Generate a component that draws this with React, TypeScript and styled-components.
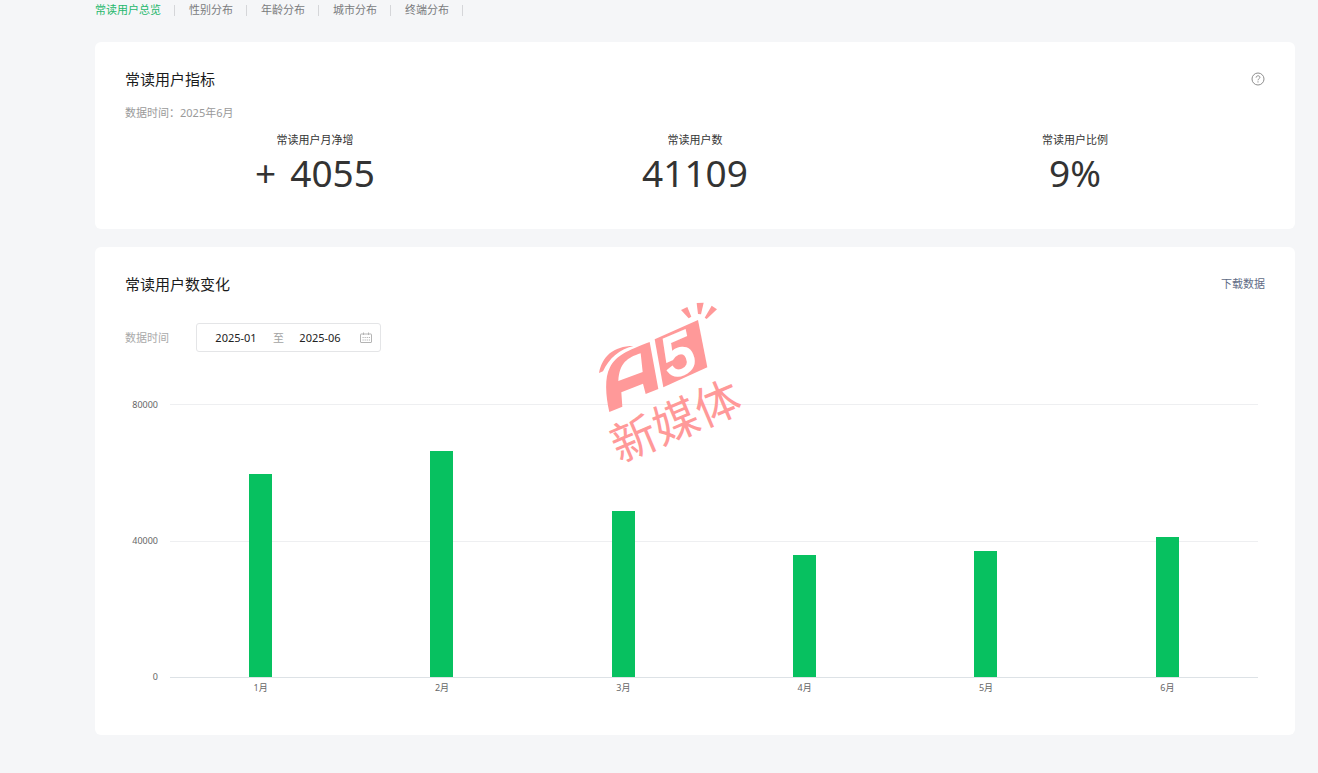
import React from "react";
import styled, { createGlobalStyle } from "styled-components";

const GlobalStyle = createGlobalStyle`
  * { box-sizing: border-box; }
  body {
    margin: 0;
    background: #f5f6f8;
    color: #353535;
    font-family: "Noto Sans", "Noto Sans CJK SC", sans-serif;
    font-size: 11px;
    line-height: 20px;
  }
`;

const Page = styled.div`
  padding: 0 23px 38px 95px;
`;

const Tabs = styled.nav`
  display: flex;
  align-items: center;
  margin-bottom: 22px;
`;

const Tab = styled.a<{ $active?: boolean }>`
  display: flex;
  align-items: center;
  white-space: nowrap;
  text-decoration: none;
  color: ${(p) => (p.$active ? "#1fb86c" : "#7a7b7d")};
  &::after {
    content: "";
    width: 1px;
    height: 11px;
    margin: 0 14px 0 13px;
    background: #d5d6d9;
  }
`;

const Card = styled.section`
  position: relative;
  background: #fff;
  border-radius: 6px;
  padding: 25px 30px 32px;
  & + & {
    margin-top: 18px;
    padding-bottom: 40px;
  }
`;

const CardHeader = styled.header`
  display: flex;
  align-items: center;
  justify-content: space-between;
  height: 24px;
`;

const CardTitle = styled.h2`
  margin: 0;
  font-size: 15px;
  line-height: 24px;
  font-weight: 400;
  color: #1a1b1c;
`;

const HelpButton = styled.button`
  display: flex;
  padding: 0;
  border: 0;
  background: none;
  color: #8e8e8e;
  cursor: pointer;
`;

const DownloadLink = styled.a`
  color: #5f6c86;
  text-decoration: none;
`;

const Period = styled.p`
  margin: 12px 0 8px;
  color: #9a9a9a;
`;

const Metrics = styled.dl`
  display: grid;
  grid-template-columns: repeat(3, 1fr);
  margin: 0;
  text-align: center;
`;

const MetricLabel = styled.dt`
  line-height: 18px;
`;

const MetricValue = styled.dd`
  display: flex;
  justify-content: center;
  gap: 14px;
  margin: 0;
  font-size: 37px;
  line-height: 48px;
  color: #333;
`;

const Filter = styled.div`
  display: flex;
  align-items: center;
  gap: 27px;
  margin: 27px 0 52px;
`;

const FilterLabel = styled.label`
  color: #a9a9a9;
`;

const DateRange = styled.div`
  display: flex;
  align-items: center;
  height: 29px;
  padding: 0 8px 0 13px;
  border: 1px solid #e4e5e7;
  border-radius: 3px;
  color: #a3a3a3;
`;

const MonthInput = styled.input`
  width: 52px;
  padding: 0;
  border: 0;
  outline: 0;
  background: none;
  color: #222;
  font: inherit;
  text-align: center;
`;

const RangeWord = styled.span`
  margin: 0 10px 0 11px;
`;

const CalendarIcon = styled.svg`
  margin-left: 14px;
`;

const Chart = styled.figure`
  display: grid;
  grid-template-columns: 33px 1fr;
  column-gap: 12px;
  margin: 0 7px 0 0;
  font-size: 9px;
  line-height: 14px;
  color: #666;
`;

const AxisY = styled.div`
  display: flex;
  flex-direction: column;
  justify-content: space-between;
  margin: -6px 0;
  text-align: right;
`;

const Plot = styled.div`
  display: grid;
  height: 274px;
  & > * { grid-area: 1 / 1; }
`;

const GridLines = styled.div`
  display: flex;
  flex-direction: column;
  justify-content: space-between;
`;

const GridLine = styled.div<{ $base?: boolean }>`
  height: 1px;
  background: ${(p) => (p.$base ? "#dde2e6" : "#eeeff1")};
`;

const Bars = styled.div`
  display: grid;
  grid-template-columns: repeat(6, 1fr);
  justify-items: center;
  align-items: end;
  padding-bottom: 1px;
`;

const Bar = styled.div`
  width: 23px;
  background: #07c160;
`;

const AxisX = styled.div`
  grid-column: 2;
  display: grid;
  grid-template-columns: repeat(6, 1fr);
  margin-top: 3px;
  text-align: center;
`;

const Watermark = styled.svg`
  position: absolute;
  top: 49px;
  left: calc(50% - 105px);
  overflow: visible;
  pointer-events: none;
`;

const tabs = ["常读用户总览", "性别分布", "年龄分布", "城市分布", "终端分布"];

const metrics = [
  { label: "常读用户月净增", sign: "+", value: "4055" },
  { label: "常读用户数", value: "41109" },
  { label: "常读用户比例", value: "9%" },
];

const MAX = 80000;
const months = [
  { name: "1月", value: 59500 },
  { name: "2月", value: 66100 },
  { name: "3月", value: 48700 },
  { name: "4月", value: 35800 },
  { name: "5月", value: 36900 },
  { name: "6月", value: 41109 },
];

function BrandWatermark() {
  return (
    <Watermark width="160" height="170" viewBox="30 18 480 510" fill="#ff9999">
      <path d="M303 60 322 51 334 80 326 85Z" />
      <path d="M350 39 371 38 363 73 354 72Z" />
      <path d="M395 47 411 58 380 87 374 83Z" />
      <path d="M57 249C66 200 100 168 160 168C118 178 88 204 69 244Z" />
      <path
        fillRule="evenodd"
        d="M88 366C77 318 73 262 90 232C107 198 142 181 209 156L235 297 197 312 189 281 124 307 127 350ZM115 273 188 246 182 190C143 203 118 218 115 273Z"
      />
      <path d="M224 148 354 90 382 232 250 292Z" />
      <text
        transform="translate(272 266) rotate(-23)"
        fill="#fff"
        stroke="#fff"
        strokeWidth="9"
        fontFamily="Liberation Sans, sans-serif"
        fontSize="168"
        fontStyle="italic"
      >
        5
      </text>
      <text
        transform="translate(283 384) rotate(-23)"
        textAnchor="middle"
        dominantBaseline="central"
        fontFamily="Noto Sans CJK SC, sans-serif"
        fontSize="136"
      >
        新媒体
      </text>
    </Watermark>
  );
}

export default function App() {
  return (
    <>
      <GlobalStyle />
      <Page>
        <Tabs>
          {tabs.map((t, i) => (
            <Tab key={t} href="#" $active={i === 0}>
              {t}
            </Tab>
          ))}
        </Tabs>

        <Card>
          <CardHeader>
            <CardTitle>常读用户指标</CardTitle>
            <HelpButton type="button" aria-label="指标说明">
              <svg width="14" height="14" viewBox="0 0 14 14" fill="none" stroke="currentColor">
                <circle cx="7" cy="7" r="6" />
                <path d="M5.1 5.6C5.1 3.2 8.9 3.2 8.9 5.4C8.9 6.7 7 6.8 7 8.3" />
                <path d="M7 9.3V10.5" />
              </svg>
            </HelpButton>
          </CardHeader>
          <Period>数据时间：2025年6月</Period>
          <Metrics>
            {metrics.map((m) => (
              <div key={m.label}>
                <MetricLabel>{m.label}</MetricLabel>
                <MetricValue>
                  {m.sign && <span>{m.sign}</span>}
                  <span>{m.value}</span>
                </MetricValue>
              </div>
            ))}
          </Metrics>
        </Card>

        <Card>
          <CardHeader>
            <CardTitle>常读用户数变化</CardTitle>
            <DownloadLink href="#">下载数据</DownloadLink>
          </CardHeader>
          <Filter>
            <FilterLabel htmlFor="from">数据时间</FilterLabel>
            <DateRange>
              <MonthInput id="from" defaultValue="2025-01" />
              <RangeWord>至</RangeWord>
              <MonthInput aria-label="结束月份" defaultValue="2025-06" />
              <CalendarIcon width="12" height="12" viewBox="0 0 12 12" fill="none" stroke="#b4b4b4">
                <rect x="0.5" y="2" width="11" height="8.5" rx="0.5" />
                <path d="M3.5 0.5V3M8.5 0.5V3" />
                <path d="M2.5 5.5H10M2.5 8H10" strokeDasharray="1.2 0.9" />
              </CalendarIcon>
            </DateRange>
          </Filter>
          <Chart>
            <AxisY>
              <span>80000</span>
              <span>40000</span>
              <span>0</span>
            </AxisY>
            <Plot>
              <GridLines>
                <GridLine />
                <GridLine />
                <GridLine $base />
              </GridLines>
              <Bars>
                {months.map((m) => (
                  <Bar key={m.name} style={{ height: `${(m.value / MAX) * 100}%` }} />
                ))}
              </Bars>
            </Plot>
            <AxisX>
              {months.map((m) => (
                <span key={m.name}>{m.name}</span>
              ))}
            </AxisX>
          </Chart>
          <BrandWatermark />
        </Card>
      </Page>
    </>
  );
}
